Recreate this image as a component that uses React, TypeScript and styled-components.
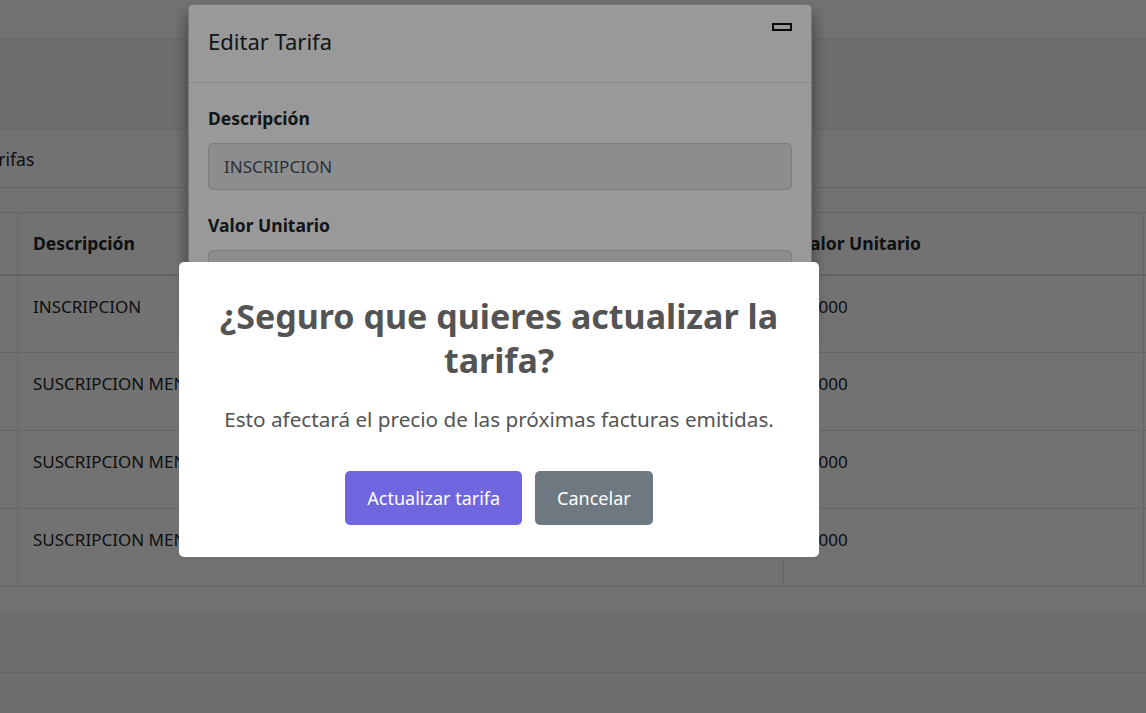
import React from "react";
import styled, { createGlobalStyle } from "styled-components";

const Global = createGlobalStyle`
  html, body { margin: 0; padding: 0; }
  body {
    font-family: "Noto Sans", "Open Sans", "Liberation Sans", sans-serif;
    color: #212529;
    overflow: hidden;
  }
  * { box-sizing: border-box; }
`;

const Screen = styled.div`
  position: relative;
  width: 1146px;
  height: 713px;
  overflow: hidden;
  background: #f4f6f9;
`;

const Page = styled.div`
  display: flex;
  flex-direction: column;
  height: 100%;
`;

const Navbar = styled.div`
  height: 39px;
  background: #ffffff;
  border-bottom: 1px solid #dee2e6;
`;

const ContentHeader = styled.div`
  height: 90px;
  background: #f4f6f9;
`;

const Card = styled.div`
  margin-left: -40px;
  width: 1300px;
  background: #ffffff;
  border-top: 1px solid #dee2e6;
`;

const CardHeader = styled.div`
  height: 58px;
  padding: 0 20px;
  display: flex;
  align-items: center;
  font-size: 17.6px;
  border-bottom: 1px solid #dee2e6;
`;

const CardBody = styled.div`
  padding: 24px 20px 25px;
`;

const Table = styled.table`
  border-collapse: collapse;
  table-layout: fixed;
  width: 1260px;
  font-size: 17px;
`;

const Th = styled.th<{ $w: number }>`
  width: ${(p) => p.$w}px;
  height: 62px;
  padding: 0 15px;
  text-align: left;
  font-size: 17.5px;
  font-weight: 700;
  border: 1px solid #dee2e6;
  border-bottom: 2px solid #dee2e6;
  white-space: nowrap;
  overflow: hidden;
`;

const Td = styled.td`
  height: 78px;
  padding: 19px 15px 0;
  vertical-align: top;
  line-height: 24px;
  border: 1px solid #dee2e6;
  white-space: nowrap;
  overflow: hidden;
`;

const Spacer = styled.div`
  flex: 1;
  background: #f4f6f9;
`;

const Footer = styled.div`
  height: 41px;
  background: #f4f6f9;
  border-top: 1px solid #dee2e6;
`;

const Backdrop = styled.div`
  position: absolute;
  inset: 0;
  background: rgba(0, 0, 0, 0.25);
`;

const ModalLayer = styled.div`
  position: absolute;
  inset: 0;
  padding: 4px 0 0 188px;
`;

const ModalContent = styled.div`
  width: 624px;
  background: #ffffff;
  border: 1px solid rgba(0, 0, 0, 0.2);
  border-radius: 5px;
  box-shadow: 0 8px 16px rgba(0, 0, 0, 0.5);
`;

const ModalHeader = styled.div`
  height: 78px;
  padding: 0 19px;
  display: flex;
  align-items: center;
  justify-content: space-between;
  border-bottom: 1px solid #dee2e6;
`;

const ModalTitle = styled.h5`
  margin: 0 0 5px;
  font-size: 22px;
  line-height: 30px;
  font-weight: 400;
  color: #212529;
`;

const CloseBtn = styled.button`
  align-self: flex-start;
  margin-top: 18px;
  padding: 0;
  border: 0;
  background: transparent;
  display: flex;
`;

const ModalBody = styled.div`
  padding: 23px 19px 40px;
  display: flex;
  flex-direction: column;
`;

const Label = styled.label`
  font-weight: 700;
  font-size: 17.5px;
  line-height: 24px;
  margin-bottom: 13px;
`;

const Input = styled.div<{ $last?: boolean }>`
  height: 47px;
  padding: 0 15px;
  display: flex;
  align-items: center;
  font-size: 17px;
  color: #495057;
  background: #e9ecef;
  border: 1px solid #ced4da;
  border-radius: 5px;
  margin-bottom: ${(p) => (p.$last ? 0 : 23)}px;
`;

const SwalLayer = styled.div`
  position: absolute;
  inset: 0;
  background: rgba(0, 0, 0, 0.4);
  padding: 262px 0 0 179px;
`;

const Popup = styled.div`
  width: 640px;
  height: 295px;
  background: #ffffff;
  border-radius: 5px;
  display: flex;
  flex-direction: column;
  align-items: center;
  padding: 32px 20px 0;
  color: #545454;
`;

const Title = styled.h2`
  margin: 0;
  font-size: 34px;
  line-height: 44px;
  font-weight: 700;
  text-align: center;
  color: #545454;
`;

const Text = styled.div`
  margin-top: 22px;
  font-size: 20.7px;
  line-height: 30px;
  text-align: center;
`;

const Actions = styled.div`
  margin-top: 37px;
  display: flex;
  gap: 13px;
`;

const SwalButton = styled.button<{ $variant: "confirm" | "cancel" }>`
  height: 54px;
  padding: 0 22px;
  border: 0;
  border-radius: 5px;
  font-family: inherit;
  font-size: 18px;
  color: #ffffff;
  background: ${(p) => (p.$variant === "confirm" ? "#7066e0" : "#6e7881")};
`;

const rows = [
  { d: "INSCRIPCION", v: "10000" },
  { d: "SUSCRIPCION MENSUAL", v: "15000" },
  { d: "SUSCRIPCION MENSUAL 2", v: "20000" },
  { d: "SUSCRIPCION MENSUAL 3", v: "25000" },
];

export default function App() {
  return (
    <Screen>
      <Global />
      <Page>
        <Navbar />
        <ContentHeader />
        <Card>
          <CardHeader>Tarifas</CardHeader>
          <CardBody>
            <Table>
              <thead>
                <tr>
                  <Th $w={37} />
                  <Th $w={766}>Descripción</Th>
                  <Th $w={360}>Valor Unitario</Th>
                  <Th $w={97} />
                </tr>
              </thead>
              <tbody>
                {rows.map((r, i) => (
                  <tr key={i}>
                    <Td />
                    <Td>{r.d}</Td>
                    <Td>{r.v}</Td>
                    <Td />
                  </tr>
                ))}
              </tbody>
            </Table>
          </CardBody>
        </Card>
        <Spacer />
        <Footer />
      </Page>
      <Backdrop />
      <ModalLayer>
        <ModalContent>
          <ModalHeader>
            <ModalTitle>Editar Tarifa</ModalTitle>
            <CloseBtn aria-label="Cerrar">
              <svg width="20" height="8" viewBox="0 0 20 8">
                <rect x="1" y="1" width="18" height="6" fill="none" stroke="#111" strokeWidth="2" />
              </svg>
            </CloseBtn>
          </ModalHeader>
          <ModalBody>
            <Label>Descripción</Label>
            <Input>INSCRIPCION</Input>
            <Label>Valor Unitario</Label>
            <Input $last>10000</Input>
          </ModalBody>
        </ModalContent>
      </ModalLayer>
      <SwalLayer>
        <Popup>
          <Title>¿Seguro que quieres actualizar la tarifa?</Title>
          <Text>Esto afectará el precio de las próximas facturas emitidas.</Text>
          <Actions>
            <SwalButton $variant="confirm">Actualizar tarifa</SwalButton>
            <SwalButton $variant="cancel">Cancelar</SwalButton>
          </Actions>
        </Popup>
      </SwalLayer>
    </Screen>
  );
}
